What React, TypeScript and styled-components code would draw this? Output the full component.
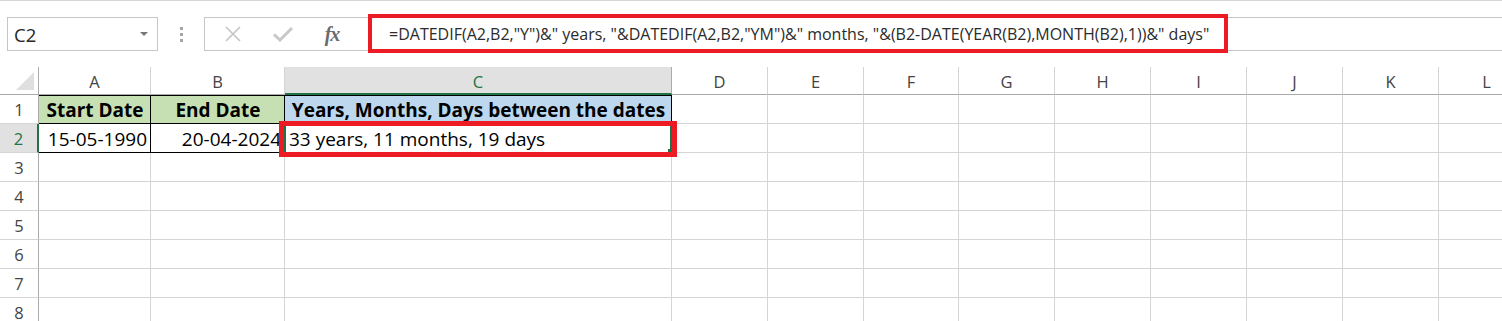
import React from 'react'
import styled, { createGlobalStyle } from 'styled-components'

const GREEN = '#217346'
const GRID = '#d4d4d4'
const HEAD_LINE = '#ababab'
const RED = '#ed1c24'

const GlobalStyle = createGlobalStyle`
  html, body {
    margin: 0;
    padding: 0;
    background: #fff;
    overflow: hidden;
  }
  body {
    font-family: "Open Sans", "Noto Sans", sans-serif;
  }
`

const Page = styled.div`
  width: 1502px;
  height: 321px;
  overflow: hidden;
  background: #fff;
`

const Toolbar = styled.div`
  position: relative;
  height: 67px;
  border-top: 1px solid #d6d6d6;
  display: flex;
  align-items: flex-start;
  padding: 16px 0 0 7px;
  box-sizing: border-box;
`

const NameBox = styled.div`
  width: 151px;
  height: 34px;
  box-sizing: border-box;
  border: 1px solid #c6c6c6;
  display: flex;
  align-items: center;
  justify-content: space-between;
  padding: 0 9px 0 6px;
  font-size: 18.5px;
  color: #262626;
`

const DropArrow = styled.span`
  width: 0;
  height: 0;
  border-left: 4px solid transparent;
  border-right: 4px solid transparent;
  border-top: 4px solid #777;
`

const Dots = styled.div`
  width: 46px;
  height: 34px;
  display: flex;
  flex-direction: column;
  align-items: center;
  justify-content: center;
  gap: 3px;
`

const Dot = styled.span`
  width: 3px;
  height: 3px;
  background: #a6a6a6;
`

const FormulaBar = styled.div`
  flex: 1;
  height: 34px;
  box-sizing: border-box;
  border: 1px solid #c6c6c6;
  border-right: none;
  display: flex;
`

const IconGroup = styled.div`
  width: 164px;
  display: flex;
  align-items: center;
  padding-left: 19px;
  box-sizing: border-box;
`

const IconSlot = styled.span`
  width: 55px;
  display: flex;
  align-items: center;
`

const Fx = styled.span`
  font-family: "Liberation Serif", "DejaVu Serif", serif;
  font-style: italic;
  font-weight: bold;
  font-size: 20px;
  color: #6b6b6b;
  margin-left: 4px;
  letter-spacing: -1px;
`

const FormulaText = styled.div`
  flex: 1;
  border-left: 1px solid #c6c6c6;
  display: flex;
  align-items: center;
  padding-left: 19px;
  font-size: 16px;
  color: #2b2b2b;
  white-space: nowrap;
`

const FormulaHighlight = styled.div`
  position: absolute;
  left: 368px;
  top: 13px;
  width: 860px;
  height: 39px;
  box-sizing: border-box;
  border: 4px solid ${RED};
  pointer-events: none;
`

const Sheet = styled.div`
  display: grid;
  grid-template-columns: 39px 112px 134px 387px 96px 96px 95px 96px 96px 96px 96px 96px 96px;
  grid-template-rows: 28px repeat(8, 29px);
`

const Corner = styled.div`
  border-right: 1px solid ${HEAD_LINE};
  border-bottom: 1px solid ${HEAD_LINE};
  position: relative;
  &::after {
    content: '';
    position: absolute;
    right: 4px;
    bottom: 4px;
    width: 0;
    height: 0;
    border-left: 18px solid transparent;
    border-bottom: 18px solid #dfdfdf;
  }
`

const ColHead = styled.div<{ $active?: boolean }>`
  box-sizing: border-box;
  display: flex;
  align-items: center;
  justify-content: center;
  font-size: 16.5px;
  color: ${(p) => (p.$active ? GREEN : '#444')};
  background: ${(p) => (p.$active ? '#e1e1e1' : '#fff')};
  border-right: 1px solid ${(p) => (p.$active ? HEAD_LINE : GRID)};
  border-bottom: ${(p) => (p.$active ? `2px solid ${GREEN}` : `1px solid ${HEAD_LINE}`)};
  padding-top: 2px;
`

const RowHead = styled.div<{ $active?: boolean }>`
  box-sizing: border-box;
  display: flex;
  align-items: center;
  justify-content: center;
  font-size: 16.5px;
  color: ${(p) => (p.$active ? GREEN : '#444')};
  background: ${(p) => (p.$active ? '#e1e1e1' : '#fff')};
  border-right: ${(p) => (p.$active ? `2px solid ${GREEN}` : `1px solid ${HEAD_LINE}`)};
  border-bottom: 1px solid ${GRID};
`

const Cell = styled.div<{
  $fill?: string
  $align?: 'left' | 'center' | 'right'
  $bold?: boolean
  $boxed?: boolean
  $top?: boolean
}>`
  position: relative;
  box-sizing: border-box;
  display: flex;
  align-items: center;
  justify-content: ${(p) =>
    p.$align === 'center' ? 'center' : p.$align === 'right' ? 'flex-end' : 'flex-start'};
  padding: 1px 3px 0 4px;
  font-size: 19px;
  font-weight: ${(p) => (p.$bold ? 700 : 400)};
  color: #000;
  white-space: nowrap;
  background: ${(p) => p.$fill || '#fff'};
  border-right: 1px solid ${(p) => (p.$boxed ? '#000' : GRID)};
  border-bottom: 1px solid ${(p) => (p.$boxed ? '#000' : GRID)};
  border-top: ${(p) => (p.$top ? '1px solid #000' : 'none')};
`

const Selection = styled.div`
  position: absolute;
  z-index: 4;
  left: -1px;
  top: -1px;
  right: -1px;
  bottom: -1px;
  border-left: 2px solid ${GREEN};
  border-right: 2px solid ${GREEN};
  pointer-events: none;
  &::after {
    content: '';
    position: absolute;
    right: -3px;
    bottom: -1px;
    width: 5px;
    height: 5px;
    background: ${GREEN};
  }
`

const CellHighlight = styled.div`
  position: absolute;
  z-index: 5;
  left: -6px;
  top: -3px;
  right: -6px;
  bottom: -5px;
  border: 5px solid ${RED};
  pointer-events: none;
`

const columns = ['A', 'B', 'C', 'D', 'E', 'F', 'G', 'H', 'I', 'J', 'K', 'L']
const emptyCols = columns.slice(3)

const CloseIcon = () => (
  <svg width="18" height="18" viewBox="0 0 18 18">
    <path d="M2 2 L16 16 M16 2 L2 16" stroke="#c4c4c4" strokeWidth="1.6" fill="none" />
  </svg>
)

const CheckIcon = () => (
  <svg width="22" height="16" viewBox="0 0 22 16">
    <path d="M2 8.5 L8 14 L20 2" stroke="#c8c8c8" strokeWidth="3" fill="none" />
  </svg>
)

export default function App() {
  const formula =
    '=DATEDIF(A2,B2,"Y")&" years, "&DATEDIF(A2,B2,"YM")&" months, "&(B2-DATE(YEAR(B2),MONTH(B2),1))&" days"'

  return (
    <Page>
      <GlobalStyle />
      <Toolbar>
        <NameBox>
          C2
          <DropArrow />
        </NameBox>
        <Dots>
          <Dot />
          <Dot />
          <Dot />
        </Dots>
        <FormulaBar>
          <IconGroup>
            <IconSlot>
              <CloseIcon />
            </IconSlot>
            <IconSlot>
              <CheckIcon />
            </IconSlot>
            <IconSlot>
              <Fx>fx</Fx>
            </IconSlot>
          </IconGroup>
          <FormulaText>{formula}</FormulaText>
        </FormulaBar>
        <FormulaHighlight />
      </Toolbar>

      <Sheet>
        <Corner />
        {columns.map((c) => (
          <ColHead key={c} $active={c === 'C'}>
            {c}
          </ColHead>
        ))}

        <RowHead>1</RowHead>
        <Cell $fill="#c6e0b4" $align="center" $bold $boxed $top>
          Start Date
        </Cell>
        <Cell $fill="#c6e0b4" $align="center" $bold $boxed $top>
          End Date
        </Cell>
        <Cell $fill="#bdd7ee" $align="center" $bold $boxed $top>
          Years, Months, Days between the dates
        </Cell>
        {emptyCols.map((c) => (
          <Cell key={c} />
        ))}

        <RowHead $active>2</RowHead>
        <Cell $align="right" $boxed>
          15-05-1990
        </Cell>
        <Cell $align="right" $boxed>
          20-04-2024
        </Cell>
        <Cell $boxed>
          33 years, 11 months, 19 days
          <Selection />
          <CellHighlight />
        </Cell>
        {emptyCols.map((c) => (
          <Cell key={c} />
        ))}

        {[3, 4, 5, 6, 7, 8].map((r) => (
          <React.Fragment key={r}>
            <RowHead>{r}</RowHead>
            {columns.map((c) => (
              <Cell key={c} />
            ))}
          </React.Fragment>
        ))}
      </Sheet>
    </Page>
  )
}
